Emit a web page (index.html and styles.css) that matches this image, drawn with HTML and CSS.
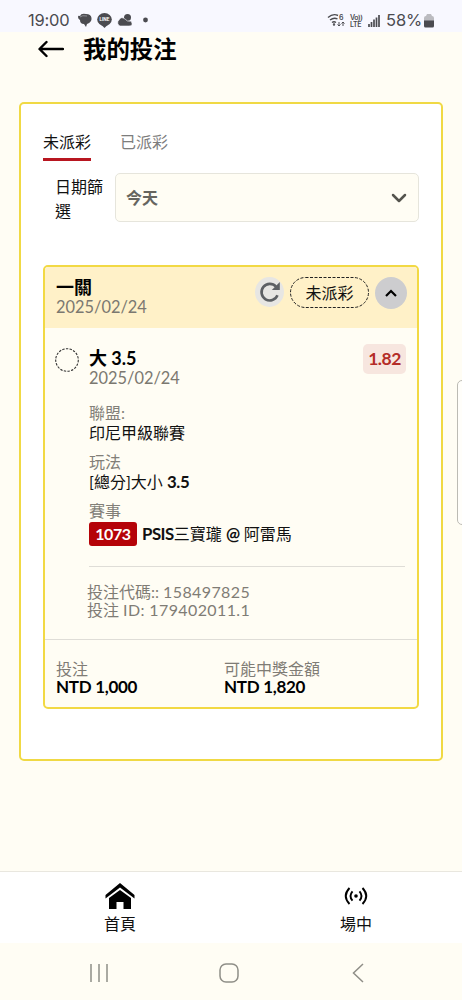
FILE: index.html
```html
<!DOCTYPE html>
<html lang="zh-Hant">
<head>
<meta charset="utf-8">
<meta name="viewport" content="width=device-width, initial-scale=1">
<title>我的投注</title>
<link rel="stylesheet" href="styles.css">
</head>
<body>
<div class="screen">
  <div class="status">
    <span class="clock">19:00</span>
    <svg class="notices" width="74" height="18" viewBox="0 0 74 18" fill="#4b4b50">
      <path d="M2 4Q3 1 8 2Q13 2 13.500 6Q14 10 9 12L8 15L6 12Q2 12 2 8Q0 7 0 5Q0 3 2 4Z"/>
      <path d="M2 5Q4 3 9 4" stroke="#aaaab0" fill="none" stroke-width=".7"/>
      <ellipse cx="26.500" cy="7.500" rx="7.300" ry="6.500"/><path d="M22.500 12H30.500L26.500 16Z"/>
      <text x="26.500" y="9.300" text-anchor="middle" class="line-label">LINE</text>
      <circle cx="49.500" cy="5.500" r="3.500"/><path d="M42 14A3.500 3.500 0 0 1 41 8Q43 4 47 7Q49 10 53 9Q56 14 51 14Z" stroke="#f8f8ff" stroke-width=".6"/>
      <circle cx="67.500" cy="8" r="2.400"/>
    </svg>
    <svg class="signals" width="55" height="18" viewBox="0 0 55 18" fill="none" stroke="#4b4b50" stroke-width="1.400">
      <path d="M1 5.500Q6 1 11 3.500M3 8Q7 5 10.500 7M5 10.500Q7 9 9 10.500"/>
      <circle cx="7" cy="12.500" r=".5"/>
      <path d="M12 10V14M10.500 12.500L12 14L13.500 12.500M16 14V10M14.500 11.500L16 10L17.500 11.500" stroke-width="1"/>
      <text x="12" y="8" class="tiny">6</text>
      <text x="23" y="8" class="tiny">Vo))</text><text x="23" y="15.200" class="tiny">LTE</text>
      <path d="M42 15V12M44.500 15V10M47 15V7.500M49.500 15V5.500M52 15V3" stroke-width="1.700"/>
    </svg>
    <span class="percent">58%</span>
    <svg width="10" height="14" viewBox="0 0 10 14"><path d="M0 4Q0 2 2 2L3 0H7L8 2Q10 2 10 4V7H0Z" fill="#bbbbc0"/><path d="M0 6.500H10V12Q10 13.500 8.500 13.500H1.500Q0 13.500 0 12Z" fill="#4b4b50"/></svg>
  </div>

  <header class="header">
    <svg width="26" height="18" viewBox="0 0 26 18" fill="none" stroke="#000" stroke-width="2.400" stroke-linecap="round" stroke-linejoin="round"><path d="M8.500 2L1.500 9L8.500 16M2 9H25"/></svg>
    <h1>我的投注</h1>
  </header>

  <main class="panel">
    <nav class="tabs"><a class="tab active">未派彩</a><a class="tab">已派彩</a></nav>
    <div class="filter">
      <label>日期篩選</label>
      <div class="select"><span>今天</span>
        <svg width="16" height="10" viewBox="0 0 16 10" fill="none" stroke="#55544e" stroke-width="2.500" stroke-linecap="round" stroke-linejoin="round"><path d="M2 2L8 8L14 2"/></svg>
      </div>
    </div>

    <article class="ticket">
      <div class="ticket-head">
        <div class="heading"><b>一關</b><span class="date">2025/02/24</span></div>
        <span class="refresh"><svg width="22" height="22" viewBox="0 0 22 22"><path d="M18.500 14.300A8.300 8.300 0 1 1 17 5.600" fill="none" stroke="#5d6064" stroke-width="2.600"/><path d="M20.800 1V9H12.800Z" fill="#5d6064"/></svg></span>
        <span class="state"><svg width="79" height="31" viewBox="0 0 79 31"><rect x=".5" y=".5" width="78" height="30" rx="15" fill="none" stroke="#222" stroke-dasharray="3 1.500"/></svg><span>未派彩</span></span>
        <span class="toggle"><svg width="12" height="8" viewBox="0 0 12 8" fill="none" stroke="#000" stroke-width="2.200"><path d="M1 7L6 2L11 7"/></svg></span>
      </div>
      <div class="pick">
        <svg width="24" height="24" viewBox="0 0 24 24"><circle cx="12" cy="12" r="11.300" fill="none" stroke="#333" stroke-width="1.100" stroke-dasharray="2.400 1.300"/></svg>
        <div class="heading"><b>大 3.5</b><span class="date">2025/02/24</span></div>
        <span class="odds">1.82</span>
      </div>
      <dl class="details">
        <dt>聯盟:</dt><dd>印尼甲級聯賽</dd>
        <dt>玩法</dt><dd>[總分]大小 <b>3.5</b></dd>
        <dt>賽事</dt><dd class="match"><span class="code">1073</span><span><b>PSIS</b>三寶瓏 <b>@</b> 阿雷馬</span></dd>
      </dl>
      <div class="ids"><p>投注代碼:: <span>158497825</span></p><p>投注 <span>ID: 179402011.1</span></p></div>
      <div class="totals">
        <div><span>投注</span><b>NTD 1,000</b></div>
        <div><span>可能中獎金額</span><b>NTD 1,820</b></div>
      </div>
    </article>
  </main>

  <nav class="bottom">
    <a><svg width="30" height="28" viewBox="0 0 30 28"><path d="M.5 12L15 0L29.500 12V15.500L15 4.500L.5 15.500Z"/><path d="M4 15L15 7L26 15V26H18.500V19H11.500V26H4Z"/></svg><span>首頁</span></a>
    <a><svg width="24" height="28" viewBox="0 0 24 28" fill="none" stroke="#000" stroke-width="1.900"><path d="M5.500 5Q-2 13 5.500 21M18.500 5Q26 13 18.500 21M8.500 8.300Q4.500 13 8.500 17.700M15.500 8.300Q19.500 13 15.500 17.700"/><circle cx="12" cy="13" r="1.800" fill="#000" stroke="none"/></svg><span>場中</span></a>
  </nav>
  <div class="system">
    <svg width="20" height="20" viewBox="0 0 20 20"><path d="M2 1V19M10 1V19M18 1V19"/></svg>
    <svg width="20" height="20" viewBox="0 0 20 20"><rect x="1" y="1" width="18" height="18" rx="6"/></svg>
    <svg width="12" height="20" viewBox="0 0 12 20"><path d="M11 1L1.500 10L11 19"/></svg>
  </div>
  <div class="edge-handle"></div>
</div>
</body>
</html>
```
FILE: styles.css
```css
* { box-sizing: border-box; }
body { margin: 0; background: #fffdf4; color: #111; font: 16px/20px Lato, "Noto Sans CJK TC", sans-serif; }
h1, p, dl, dd { margin: 0; }
svg { display: block; flex: none; }
.screen { position: relative; width: 462px; height: 1000px; overflow: hidden; display: flex; flex-direction: column; }

.status { height: 32px; flex: none; background: #f8f8ff; display: flex; align-items: center; padding: 8px 28px 0; color: #4b4b50; font: 400 16.5px/24px Inter, sans-serif; }
.clock { width: 43px; letter-spacing: -.2px; }
.notices { margin-left: 7px; }
.line-label { font: 700 4.5px Inter, sans-serif; fill: #fff; }
.tiny { font: 600 7px Inter, sans-serif; fill: #4b4b50; stroke: none; letter-spacing: -.4px; }
.signals { margin-left: auto; }
.status svg { margin-top: 1px; }
.percent { width: 36px; margin: 0 2px 0 4px; letter-spacing: -.1px; white-space: nowrap; }

.header { height: 34px; flex: none; display: flex; align-items: center; padding-left: 38px; gap: 19px; }
h1 { font-size: 23.4px; line-height: 34px; font-weight: 700; color: #000; }

.panel { margin: 36px 19px 0; height: 659px; flex: none; border: 2px solid #f0d944; border-radius: 5px; background: #fff; padding: 24px 22px 0; }
.tabs { display: flex; gap: 29px; }
.tab { height: 33px; line-height: 28px; color: #7d7d7d; border-bottom: 3px solid transparent; }
.active { color: #111; border-color: #b81620; }
.filter { display: flex; margin-top: 12px; padding-left: 12px; }
.filter label { width: 60px; padding-right: 12px; line-height: 24px; padding-top: 2px; }
.select { flex: 1; height: 49px; display: flex; align-items: center; justify-content: space-between; padding: 0 11px 0 10px; background: #fffdf4; border: 1px solid #e6e5dc; border-radius: 5px; color: #66655f; font-weight: 700; }

.ticket { margin-top: 42px; height: 444px; border: 2px solid #f2d944; border-radius: 5px; background: #fffdf4; overflow: hidden; }
.ticket-head { height: 61px; background: #fff1c8; display: flex; align-items: flex-start; padding: 10px 10px 0 11px; }
.heading { display: flex; flex-direction: column; flex: 1; }
.heading b { font-size: 18px; color: #000; }
.date { color: #7b7870; font-size: 16.4px; }
.refresh { width: 29px; height: 30px; display: grid; place-items: center; background: #e7e6e3; border-radius: 50%; margin-right: 6px; }
.state { display: grid; place-items: center; margin-right: 6px; }
.state > * { grid-area: 1 / 1; }
.toggle { width: 32px; height: 32px; border-radius: 50%; display: grid; place-items: center; background: #cdcdcf; }
.pick { display: flex; align-items: flex-start; padding: 20px 11px 0 10px; }
.pick .heading { margin-left: 10px; }
.odds { width: 43px; height: 30px; margin-top: -4px; border-radius: 5px; background: #f7e6df; color: #b42c27; font-weight: 700; font-size: 17.5px; letter-spacing: -.5px; line-height: 30px; text-align: center; }
.details { margin: 15px 12px 0 44px; height: 164px; border-bottom: 1px solid #dfddd7; }
dt { color: #827f78; }
dd { margin-bottom: 9px; }
dd b { font-size: 16.8px; letter-spacing: -.3px; }
.match { display: flex; gap: 5px; line-height: 24px; margin-top: 1px; white-space: nowrap; }
.match b { letter-spacing: -.5px; }
.code { width: 48px; background: #b50308; color: #fff; border-radius: 3px; font-weight: 700; letter-spacing: -.4px; text-align: center; }
.ids { padding: 16px 0 0 42px; height: 72px; color: #7f7c75; line-height: 18px; }
.ids span { letter-spacing: .38px; }
.totals { display: grid; grid-template-columns: 168px 1fr; padding: 20px 11px 0; border-top: 1px solid #dfddd7; line-height: 18px; }
.totals div { display: flex; flex-direction: column; }
.totals span { color: #7f7c75; }
.totals b { color: #000; font-size: 17px; letter-spacing: -.3px; }

.bottom { height: 72px; margin-top: auto; flex: none; display: flex; background: #fff; border-top: 1px solid #e9e7df; padding: 11px 2px 0; }
.bottom a { flex: 0 0 236px; display: flex; flex-direction: column; align-items: center; gap: 2px; line-height: 22px; }
.system { height: 57px; flex: none; display: flex; align-items: center; justify-content: space-between; padding: 3px 98px 0 89px; }
.system svg { fill: none; stroke: #8f8e87; stroke-width: 1.5; }
.system svg:nth-child(2) { margin-right: 3px; }
.edge-handle { position: absolute; right: -14px; top: 380px; width: 19px; height: 145px; border: 1px solid #bcbbb4; border-radius: 5px; background: #fffefa; }
```
